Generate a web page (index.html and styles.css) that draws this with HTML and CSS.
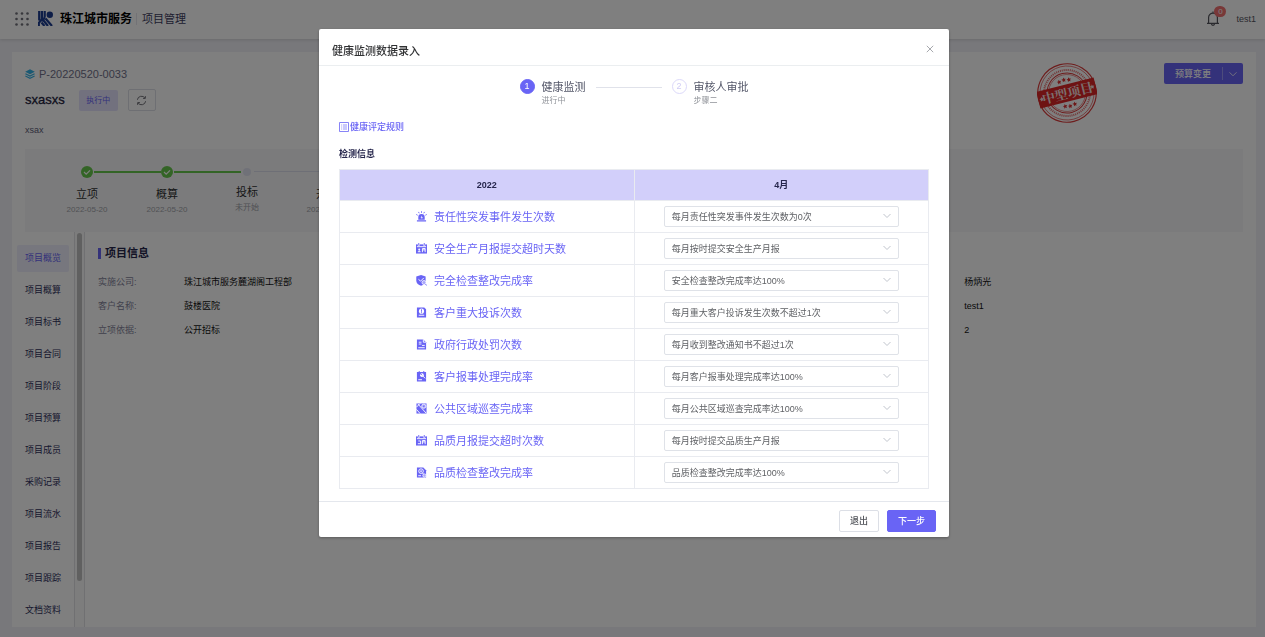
FILE: index.html
```html
<!DOCTYPE html>
<html lang="zh-CN">
<head>
<meta charset="utf-8">
<meta name="viewport" content="width=device-width, initial-scale=1">
<title>项目管理</title>
<link rel="stylesheet" href="styles.css">
</head>
<body>
<div class="app">
  <header class="topbar">
    <svg class="apps" viewBox="0 0 14 14" aria-hidden="true"><g fill="#71717a"><circle cx="1.5" cy="1.5" r="1.3"/><circle cx="7" cy="1.5" r="1.3"/><circle cx="12.5" cy="1.5" r="1.3"/><circle cx="1.5" cy="7" r="1.3"/><circle cx="7" cy="7" r="1.3"/><circle cx="12.5" cy="7" r="1.3"/><circle cx="1.5" cy="12.5" r="1.3"/><circle cx="7" cy="12.5" r="1.3"/><circle cx="12.5" cy="12.5" r="1.3"/></g></svg>
    <svg class="logo" viewBox="0 0 15 15" aria-hidden="true"><circle cx="11.800" cy="3.800" r="3.200" fill="#1c3c90"/><path d="M1.200 0v9.500M3.900 0v7.500Q3.900 9.500 1 11.500M6.700 0v5.500Q6.700 8 4 10M.8 11v4M3.500 11.500L6.500 15M5.500 9.500L10 15M7.500 7.500L14 15" fill="none" stroke="#1c3c90" stroke-width="2.200"/></svg>
    <strong class="brand">珠江城市服务</strong>
    <span class="module">项目管理</span>
    <button class="bell" type="button" aria-label="通知">
      <svg viewBox="0 0 14 15" fill="none" stroke="#55555c" stroke-width="1.200"><path d="M7 .5v1.500M1 12.300h12M2.600 12V6.500a4.400 4.400 0 0 1 8.800 0V12M5.500 12.800a1.500 1.500 0 0 0 3 0"/></svg>
      <span class="badge">0</span>
    </button>
    <span class="user">test1</span>
  </header>

  <main class="card">
    <section class="summary">
      <div class="summary-text">
        <div class="code">
          <svg viewBox="0 0 10 10" aria-hidden="true"><path d="M5 .2l4.800 2.500L5 5.200.2 2.700z" fill="#35b3e6"/><path d="M.4 4.700L5 7.100l4.600-2.400M.4 6.900L5 9.300l4.600-2.400" fill="none" stroke="#35b3e6" stroke-width="1.100"/></svg>
          <span>P-20220520-0033</span>
        </div>
        <div class="name-row">
          <h1>sxasxs</h1>
          <span class="tag">执行中</span>
          <button class="refresh" type="button" aria-label="刷新"><svg viewBox="0 0 12 12" fill="none" stroke="#66666e" stroke-width="1"><path d="M1.500 5.200a4.500 4.500 0 0 1 8.300-1.700M10.500 6.800a4.500 4.500 0 0 1-8.300 1.700M10.200 1.200v2.500H7.700M1.800 10.800V8.300h2.500"/></svg></button>
        </div>
        <p class="desc">xsax</p>
      </div>
      <svg class="stamp" viewBox="0 0 60 60" role="img" aria-label="中型项目">
        <g transform="rotate(-14 30 30)">
          <g fill="none" stroke="#dc3a3a"><circle cx="30" cy="30" r="29.200" stroke-width="1.200"/><circle cx="30" cy="30" r="27" stroke-width=".6"/><circle cx="30" cy="30" r="23" stroke-width="2" stroke-dasharray="1.100 .9" opacity=".7"/><circle cx="30" cy="30" r="20" stroke-width="1"/><circle cx="30" cy="30" r="18.500" stroke-width=".5"/></g>
          <path d="M.5 21.500h59v17H.5z" fill="#dc2626"/>
          <text x="30.500" y="35" text-anchor="middle" class="stamp-text">中型项目</text>
          <defs><path id="star" d="M0-2.400l.7 1.500 1.600.2L1.100.5l.3 1.600L0 1.300l-1.400.8.3-1.600-1.200-1.200 1.600-.2z"/></defs>
          <g fill="#dc3030"><use href="#star" x="25" y="17.500"/><use href="#star" x="30" y="16.500"/><use href="#star" x="35" y="17.500"/><use href="#star" x="25" y="42.500"/><use href="#star" x="30" y="43.500"/><use href="#star" x="35" y="42.500"/></g>
          <g fill="#f5dede"><use href="#star" x="4" y="30"/><use href="#star" x="56" y="30"/></g>
        </g>
      </svg>
      <div class="split">
        <button type="button">预算变更</button>
        <button type="button" class="split-more" aria-label="更多"><svg viewBox="0 0 8 8" fill="none" stroke="#fff" stroke-width=".8"><path d="M.5 2.300L4 5.800l3.500-3.500"/></svg></button>
      </div>
    </section>

    <ol class="progress">
      <li class="done"><i><svg viewBox="0 0 12 12"><path d="M3 6l2.200 2.200L9 4.300" fill="none" stroke="#fff" stroke-width="1.200"/></svg></i><b>立项</b><small>2022-05-20</small></li>
      <li class="done"><i><svg viewBox="0 0 12 12"><path d="M3 6l2.200 2.200L9 4.300" fill="none" stroke="#fff" stroke-width="1.200"/></svg></i><b>概算</b><small>2022-05-20</small></li>
      <li class="todo"><i></i><b>投标</b><small>未开始</small></li>
      <li class="done"><i></i><b>开工</b><small>2022-05-20</small></li>
    </ol>

    <div class="body">
      <nav class="menu">
        <a class="active" href="#">项目概览</a><a href="#">项目概算</a><a href="#">项目标书</a><a href="#">项目合同</a><a href="#">项目阶段</a><a href="#">项目预算</a><a href="#">项目成员</a><a href="#">采购记录</a><a href="#">项目流水</a><a href="#">项目报告</a><a href="#">项目跟踪</a><a href="#">文档资料</a>
      </nav>
      <div class="track"><div class="thumb"></div></div>
      <section class="info">
        <h2>项目信息</h2>
        <dl>
          <dt>实施公司:</dt><dd>珠江城市服务麓湖阁工程部</dd><dd>杨炳光</dd>
          <dt>客户名称:</dt><dd>鼓楼医院</dd><dd>test1</dd>
          <dt>立项依据:</dt><dd>公开招标</dd><dd>2</dd>
        </dl>
      </section>
    </div>
  </main>
</div>

<div class="overlay">
  <div class="modal" role="dialog" aria-modal="true" aria-labelledby="dlg-title">
    <header class="modal-head">
      <h2 id="dlg-title">健康监测数据录入</h2>
      <button class="close" type="button" aria-label="关闭"><svg viewBox="0 0 10 10" stroke="#909399"><path d="M1 1l8 8M9 1L1 9"/></svg></button>
    </header>
    <div class="modal-body">
      <ol class="steps">
        <li class="current"><i>1</i><div><b>健康监测</b><small>进行中</small></div></li>
        <li class="line"></li>
        <li><i>2</i><div><b>审核人审批</b><small>步骤二</small></div></li>
      </ol>
      <a class="rules" href="#"><svg viewBox="0 0 10 10" fill="none" stroke="#6964f5"><path d="M.5.5h9v9h-9z" stroke-width=".8"/><path d="M2.200 3h1M4 3h4M2.200 5h1M4 5h4M2.200 7h1M4 7h4" stroke-width=".7"/></svg>健康评定规则</a>
      <h3>检测信息</h3>
      <table>
        <thead><tr><th scope="col">2022</th><th scope="col">4月</th></tr></thead>
        <tbody>
          <tr><td><label for="s1"><svg viewBox="0 0 12 12"><path d="M1 10.200h10v1.300H1zM2.500 9.500V6.800a3.500 3.500 0 0 1 7 0v2.700z"/><path d="M6 .3v1.700M2.700 1l.8 1.500M9.300 1l-.8 1.500M.3 3.800l1.500.8M11.700 3.800l-1.500.8" stroke="currentColor"/><path d="M6.500 5L5 7.300h1.200V9l1.300-2.300H6.300z" class="cut"/></svg>责任性突发事件发生次数</label></td><td><div class="pick"><select id="s1"><option>每月责任性突发事件发生次数为0次</option></select><svg viewBox="0 0 8 8"><path d="M.5 2l3.500 3.500L7.500 2"/></svg></div></td></tr>
          <tr><td><label for="s2"><svg viewBox="0 0 12 12"><path d="M0 1.500h12v10H0z"/><path d="M3 0v3M9 0v3" class="knife"/><path d="M3 0v2.500M9 0v2.500" stroke="currentColor"/><path d="M1 4h10M2 9.500h3M3.500 9.500V6M2.500 7h2M7 10V6h3v4M7 7.500h3" class="line-cut"/></svg>安全生产月报提交超时天数</label></td><td><div class="pick"><select id="s2"><option>每月按时提交安全生产月报</option></select><svg viewBox="0 0 8 8"><path d="M.5 2l3.500 3.500L7.500 2"/></svg></div></td></tr>
          <tr><td><label for="s3"><svg viewBox="0 0 12 12"><path d="M5.500 0l5 1.700v4.500c0 2.800-2.300 4.500-5 5.500-2.700-1-5.200-2.700-5.200-5.500V1.700z"/><path d="M2.700 4.700L5 6.700l3.500-3.500" class="line-cut"/><circle cx="8.700" cy="8.200" r="2.200" class="lens"/><path d="M10.200 9.700l1.500 1.800" stroke="currentColor"/></svg>完全检查整改完成率</label></td><td><div class="pick"><select id="s3"><option>安全检查整改完成率达100%</option></select><svg viewBox="0 0 8 8"><path d="M.5 2l3.500 3.500L7.500 2"/></svg></div></td></tr>
          <tr><td><label for="s4"><svg viewBox="0 0 12 12"><path d="M1 .5h8l2 2v9H1z"/><circle cx="6" cy="4.500" r="2.800" class="cut"/><path d="M6 2.500v2.700M6 5.700v1" stroke="currentColor"/><path d="M3 9h6" class="line-cut"/></svg>客户重大投诉次数</label></td><td><div class="pick"><select id="s4"><option>每月重大客户投诉发生次数不超过1次</option></select><svg viewBox="0 0 8 8"><path d="M.5 2l3.500 3.500L7.500 2"/></svg></div></td></tr>
          <tr><td><label for="s5"><svg viewBox="0 0 12 12"><path d="M1 .5h7l3 3v8H1z"/><path d="M8 .5v3h3M3 3.500h3M3 5.500h3M6.500 7h3M2.500 9.500h7" class="line-cut"/></svg>政府行政处罚次数</label></td><td><div class="pick"><select id="s5"><option>每月收到整改通知书不超过1次</option></select><svg viewBox="0 0 8 8"><path d="M.5 2l3.500 3.500L7.500 2"/></svg></div></td></tr>
          <tr><td><label for="s6"><svg viewBox="0 0 12 12"><path d="M1 1h10v10.500H1zM3 0h1v1H3zM8 0h1v1H8z"/><circle cx="6.500" cy="4.500" r="2" class="cut"/><path d="M7 5l3 3M2.500 9.500h4" class="line-cut"/><path d="M4.500 2.500L6.700 4.700" stroke="currentColor"/></svg>客户报事处理完成率</label></td><td><div class="pick"><select id="s6"><option>每月客户报事处理完成率达100%</option></select><svg viewBox="0 0 8 8"><path d="M.5 2l3.500 3.500L7.500 2"/></svg></div></td></tr>
          <tr><td><label for="s7"><svg viewBox="0 0 12 12"><path d="M.5.5h11v11H.5z"/><path d="M.5 4.500L4.500.5M2 1l9 10M.5 7l4 4.500" class="line-cut"/><circle cx="8.500" cy="3.500" r="2.300" class="lens"/><circle cx="8.500" cy="3.500" r=".8"/></svg>公共区域巡查完成率</label></td><td><div class="pick"><select id="s7"><option>每月公共区域巡查完成率达100%</option></select><svg viewBox="0 0 8 8"><path d="M.5 2l3.500 3.500L7.500 2"/></svg></div></td></tr>
          <tr><td><label for="s8"><svg viewBox="0 0 12 12"><path d="M0 1.500h12v10H0z"/><path d="M3 0v3M9 0v3" class="knife"/><path d="M3 0v2.500M9 0v2.500" stroke="currentColor"/><path d="M1 4h10M2 9.500h3.500M2.500 6.500h2.500v3M7 10V6h3v4M7 7.500h3" class="line-cut"/></svg>品质月报提交超时次数</label></td><td><div class="pick"><select id="s8"><option>每月按时提交品质生产月报</option></select><svg viewBox="0 0 8 8"><path d="M.5 2l3.500 3.500L7.500 2"/></svg></div></td></tr>
          <tr><td><label for="s9"><svg viewBox="0 0 12 12"><path d="M1 .5h7l3 3v8H1z"/><circle cx="5.500" cy="4.500" r="2.500" class="line-cut"/><circle cx="5.500" cy="4.500" r=".9" class="cut"/><path d="M2.500 9.500h3M7 6.500l1.500 1.500" class="line-cut"/><circle cx="9.200" cy="9.300" r="1.800" class="lens"/></svg>品质检查整改完成率</label></td><td><div class="pick"><select id="s9"><option>品质检查整改完成率达100%</option></select><svg viewBox="0 0 8 8"><path d="M.5 2l3.500 3.500L7.500 2"/></svg></div></td></tr>
        </tbody>
      </table>
    </div>
    <footer class="modal-foot">
      <button class="btn" type="button">退出</button>
      <button class="btn primary" type="button">下一步</button>
    </footer>
  </div>
</div>
</body>
</html>
```

FILE: styles.css
```css
* { box-sizing: border-box; }
body {
  margin: 0;
  font: 9px/16px "Liberation Sans", "Noto Sans CJK SC", sans-serif;
  color: #303133;
  background: #f0f0f6;
}
button, select { font: inherit; margin: 0; }
button { cursor: pointer; }
h1, h2, h3, p, ol, dl, dd { margin: 0; padding: 0; }
ol { list-style: none; }
a { text-decoration: none; }
i, b { font-style: normal; font-weight: 400; }
svg { display: block; flex: none; }

.app { display: flex; flex-direction: column; height: 100vh; min-height: 560px; overflow: hidden; }
.topbar {
  display: flex; align-items: center; flex: none;
  height: 39px; padding: 0 9px 2px 15px;
  background: #fff; box-shadow: 0 1px 3px rgba(0, 0, 0, .12);
}
.apps { width: 14px; height: 14px; margin-right: 9px; }
.logo { width: 15px; height: 15px; margin-right: 7px; }
.brand { font-size: 12px; color: #000; }
.module { margin-left: 4px; padding-left: 5px; border-left: 1px solid #e4e4ec; font-size: 11px; line-height: 12px; color: #3c3c60; }
.bell { position: relative; margin-left: auto; padding: 0; border: 0; background: none; }
.bell svg { width: 14px; height: 15px; }
.badge {
  position: absolute; left: 8px; top: -5px;
  width: 12px; height: 11px; border-radius: 6px;
  background: #f07070; color: #fff; font-size: 8px; line-height: 11px; text-align: center;
}
.user { margin-left: 16px; color: #55555f; }

.card { display: flex; flex-direction: column; flex: 1; min-height: 0; margin: 13px 9px 10px 12px; background: #fff; }
.summary { display: flex; align-items: flex-start; padding: 11px 13px 11px; }
.summary-text { flex: 1; }
.code { display: flex; align-items: center; gap: 4px; font-size: 11px; line-height: 22px; color: #71718a; }
.code svg { width: 10px; height: 10px; }
.name-row { display: flex; align-items: center; margin-top: 4px; }
h1 { font-size: 13px; line-height: 22px; font-weight: 400; color: #1e1e3c; -webkit-text-stroke: .3px; }
.tag { margin-left: 14px; width: 39px; border-radius: 2px; background: #e4e2fd; color: #6964f5; font-size: 8px; line-height: 21px; text-align: center; }
.refresh { display: flex; align-items: center; justify-content: center; margin-left: 10px; width: 28px; height: 22px; padding: 0; border: 1px solid #dcdfe6; border-radius: 2px; background: #fff; }
.refresh svg { width: 11px; height: 11px; }
.desc { margin-top: 11px; color: #606078; }
.stamp { width: 60px; height: 60px; margin-right: 67px; }
.stamp-text { font: 700 13px "Noto Serif CJK SC", "Noto Sans CJK SC", serif; fill: #f5dede; }
.split { display: flex; height: 21px; border-radius: 2px; background: #6964f5; }
.split button { padding: 0 11px; border: 0; background: none; color: #fff; font-weight: 500; }
.split .split-more { width: 21px; margin: 4px 0; padding: 0 6px; border-left: 1px solid #9b98f9; }
.split-more svg { width: 8px; height: 8px; }

.progress { display: flex; flex: none; height: 83px; margin: 0 13px; padding: 17px 0 0 22px; background: #f7f7f8; }
.progress li { position: relative; display: flex; flex-direction: column; align-items: center; width: 80px; }
.progress i { width: 12px; height: 12px; border-radius: 50%; }
.progress .done i { background: #67c94c; }
.progress .todo i { width: 8px; height: 8px; margin: 2px; background: #e1e3f0; }
.progress li::after { content: ""; position: absolute; left: 47px; top: 5px; width: 67px; height: 2px; background: #67c94c; }
.progress li.todo::after { height: 1px; background: #dcdfec; }
.progress li:last-child::after { content: none; }
.progress b { margin-top: 8px; font-size: 11px; }
.progress small { font-size: 8px; color: #a0a3ab; }
.progress .todo b { margin-top: 6px; }

.body { display: flex; flex: 1; min-height: 0; }
.menu { display: flex; flex-direction: column; gap: 5px; width: 62px; padding: 13px 5px 0; overflow: hidden; }
.menu a { flex: none; border-radius: 2px; line-height: 27px; text-align: center; color: #30305c; }
.menu a.active { background: #eeeefc; color: #6964f5; }
.track { width: 11px; border: 1px solid #e0e0e4; border-width: 0 1px; background: #fafafa; }
.thumb { width: 5px; height: 88%; margin: 1px auto 0; border-radius: 3px; background: #c1c1c1; }
.info { flex: 1; padding: 13px 13px; }
.info h2 { display: flex; align-items: center; gap: 4px; font-size: 11px; color: #26264c; }
.info h2::before { content: ""; width: 3px; height: 11px; background: #6964f5; }
.info dl { display: grid; grid-template-columns: 86px 14fr 5fr; row-gap: 8px; margin-top: 13px; color: #111; }
.info dt { color: #83839a; }

.overlay { position: fixed; inset: 0; display: flex; align-items: flex-start; justify-content: center; padding: 29px 0 0 3px; background: rgba(0, 0, 0, .5); overflow: auto; }
.modal { width: 630px; max-width: 100%; border-radius: 2px; background: #fff; box-shadow: 0 1px 3px rgba(0, 0, 0, .3); }
.modal-head { display: flex; align-items: center; justify-content: space-between; height: 37px; padding: 7px 15px 0 13px; border-bottom: 1px solid #ebeef0; }
.modal-head h2 { font-size: 11px; font-weight: 500; }
.close { padding: 0 0 4px; border: 0; background: none; }
.close svg { width: 8px; height: 8px; }
.modal-body { padding: 13px 20px 12px; }
.steps { display: flex; justify-content: center; line-height: 16px; }
.steps li { display: flex; gap: 7px; }
.steps i { width: 15px; height: 15px; border: 1px solid #dcd9fa; border-radius: 50%; line-height: 13px; text-align: center; color: #d0ccf5; }
.steps .current i { border-color: #6964f5; background: #6964f5; color: #fff; }
.steps b, .steps small { display: block; }
.steps b { font-size: 11px; color: #55586a; }
.steps small { font-size: 8px; line-height: 12px; color: #909399; }
.steps .line { width: 66px; height: 1px; margin: 8px 10px 0; background: #e0e2ea; }
.rules { display: flex; align-items: center; width: max-content; margin-top: 12px; color: #6964f5; font-weight: 500; }
.rules svg { width: 10px; height: 10px; margin-right: 1px; }
h3 { margin: 11px 0 7px; font-size: 9px; color: #26264c; }
table { width: 100%; border-collapse: collapse; table-layout: fixed; }
th, td { height: 32px; padding: 0; border: 1px solid #e9ebf0; }
th { height: 31px; background: #d2cffa; color: #26264c; font-weight: 700; }
td:first-child { padding-left: 76px; }
label { display: flex; align-items: center; gap: 7px; font-size: 11px; color: #6964f5; }
label svg { width: 11px; height: 11px; fill: currentColor; }
label .cut { fill: #fff; stroke: none; }
label .knife { stroke: #fff; stroke-width: 2; }
label .line-cut { fill: none; stroke: #fff; stroke-width: 1; }
label .lens { fill: #a9a6fa; stroke: #fff; stroke-width: .8; }
.pick { position: relative; width: 80%; margin: 0 auto; }
.pick select { display: block; width: 100%; height: 21px; padding: 0 22px 0 7px; border: 1px solid #dfe2e8; border-radius: 2px; background: #fff; color: #606266; appearance: none; }
.pick svg { position: absolute; right: 8px; top: 6px; width: 8px; height: 8px; fill: none; stroke: #c0c4cc; pointer-events: none; }
.modal-foot { display: flex; justify-content: flex-end; gap: 8px; padding: 8px 13px 5px; border-top: 1px solid #e4e7ed; }
.btn { height: 22px; padding: 0 10px; border: 1px solid #dcdfe6; border-radius: 2px; background: #fff; color: #505258; font-weight: 500; }
.btn.primary { border-color: #6964f5; background: #6964f5; color: #fff; }
```
